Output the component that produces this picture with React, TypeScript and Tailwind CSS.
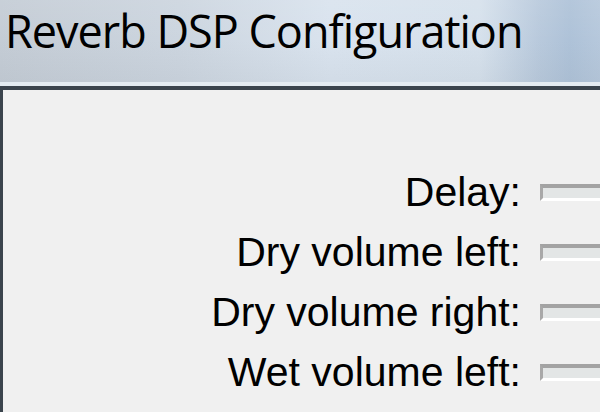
const rows = ["Delay:", "Dry volume left:", "Dry volume right:", "Wet volume left:"];

function Track() {
  return (
    <div className="h-[17px] flex-1 border-t-[4px] border-l-[3px] border-b-[3px] border-t-[#a3a3a3] border-l-[#a8a8a8] border-b-white bg-[#e3e6e6]" />
  );
}

export default function App() {
  return (
    <div className="w-[600px] h-[412px] overflow-hidden flex flex-col bg-[#f0f0f0]">
      <div className="h-[82px] shrink-0 bg-[linear-gradient(180deg,rgba(255,255,255,0.08)_0%,rgba(255,255,255,0)_50%,rgba(120,130,140,0.08)_100%),linear-gradient(90deg,#c4ccd5_0%,#ccd5df_30%,#d9e3ee_55%,#d6e1ec_80%,#b8c9dc_90%,#aec2d8_95%,#b6c8dc_100%)]">
        <div className="pl-[5px] text-[45px] leading-[62px] tracking-[-1px] text-black font-['Open_Sans',sans-serif]">
          Reverb DSP Configuration
        </div>
      </div>
      <div className="h-[4px] shrink-0 bg-[#e4ebf1]" />
      <div className="flex-1 border-t-[4px] border-l-[3px] border-[#3b444d] bg-[#f0f0f0] pt-[72px]">
        <div className="flex flex-col">
          {rows.map((r) => (
            <div key={r} className="h-[60px] flex items-center">
              <div className="w-[518px] shrink-0 text-right text-[41px] leading-[60px] text-black font-['Liberation_Sans',sans-serif]">
                {r}
              </div>
              <div className="w-[19px] shrink-0" />
              <Track />
            </div>
          ))}
        </div>
      </div>
    </div>
  );
}
